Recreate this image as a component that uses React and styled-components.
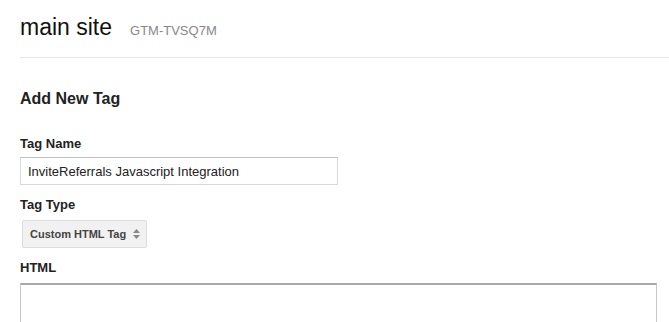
import styled, {createGlobalStyle} from 'styled-components';

const GlobalStyle = createGlobalStyle`
    html, body {
        margin: 0;
        padding: 0;
        background: #fff;
    }

    body {
        font-family: "Liberation Sans", Arial, sans-serif;
        color: #222;
        overflow: hidden;
    }
`

const Page = styled.div`
    padding-left: 20px;
`

const Header = styled.header`
    display: flex;
    align-items: baseline;
    padding: 13px 0 16px;
    border-bottom: 1px solid #e5e5e5;
`

const Title = styled.h1`
    margin: 0;
    font-size: 23px;
    line-height: 28px;
    font-weight: normal;
    color: #111;
`

const ContainerId = styled.span`
    margin-left: 18px;
    font-size: 13px;
    color: #888;
`

const Form = styled.form`
    display: flex;
    flex-direction: column;
    align-items: flex-start;
    padding: 31px 12px 0 0;
`

const Heading = styled.h2`
    margin: 0 0 27px;
    font-size: 16px;
    line-height: 20px;
    font-weight: bold;
    color: #222;
`

const Label = styled.label`
    display: block;
    margin: ${({$first}) => ($first ? '0' : '12px')} 0 5px;
    font-size: 13px;
    line-height: 16px;
    font-weight: bold;
    color: #222;
`

const TextInput = styled.input`
    box-sizing: border-box;
    width: 318px;
    height: 28px;
    margin: 0;
    padding: 0 7px;
    border: 1px solid #d9d9d9;
    border-top-color: #c0c0c0;
    border-radius: 0;
    font-family: inherit;
    font-size: 13px;
    color: #222;
    outline: none;
`

const SelectButton = styled.div`
    box-sizing: border-box;
    display: flex;
    align-items: center;
    gap: 7px;
    width: 125px;
    height: 28px;
    margin: 2px 0 0 2px;
    padding: 0 0 0 7px;
    background: #f1f1f1;
    border: 1px solid #dcdcdc;
    border-radius: 2px;
    font-size: 11px;
    font-weight: bold;
    color: #444;
    white-space: nowrap;

    & > svg {
        flex-shrink: 0;
    }
`

const CodeArea = styled.div`
    box-sizing: border-box;
    width: 100%;
    height: 120px;
    margin-top: 2px;
    border: 1px solid #c8c8c8;
    border-top: 2px solid #a9a9a9;
    background: #fff;
`

function UpDownArrows() {
    return (
        <svg width="7" height="10" viewBox="0 0 7 10">
            <polygon points="3.5,0 7,4 0,4" fill="#888"/>
            <polygon points="0,6 7,6 3.5,10" fill="#888"/>
        </svg>
    )
}

export default function App() {
    return (
        <Page>
            <GlobalStyle/>
            <Header>
                <Title>main site</Title>
                <ContainerId>GTM-TVSQ7M</ContainerId>
            </Header>
            <Form>
                <Heading>Add New Tag</Heading>
                <Label $first>Tag Name</Label>
                <TextInput defaultValue="InviteReferrals Javascript Integration"/>
                <Label>Tag Type</Label>
                <SelectButton>
                    Custom HTML Tag
                    <UpDownArrows/>
                </SelectButton>
                <Label>HTML</Label>
                <CodeArea/>
            </Form>
        </Page>
    )
}
